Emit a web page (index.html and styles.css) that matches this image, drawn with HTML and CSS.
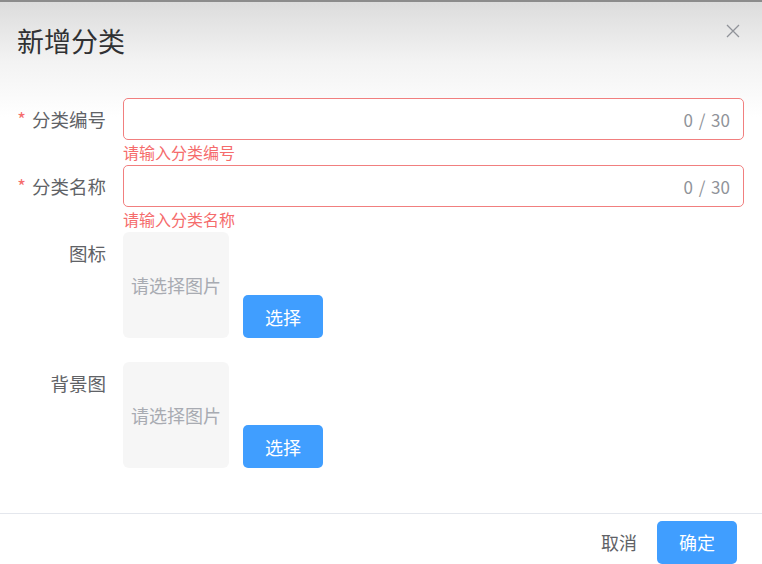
FILE: index.html
```html
<!DOCTYPE html>
<html lang="zh-CN">
<head>
  <meta charset="UTF-8">
  <meta name="viewport" content="width=device-width, initial-scale=1.0">
  <title>新增分类</title>
  <link rel="stylesheet" href="styles.css">
</head>
<body>
  <div class="dialog">
    <div class="dialog-header">
      <span class="dialog-title">新增分类</span>
      <button class="close-btn" aria-label="关闭">
        <svg width="14" height="14" viewBox="0 0 14 14">
          <path d="M1 1 L13 13 M13 1 L1 13" stroke="#909399" stroke-width="1.3" fill="none"/>
        </svg>
      </button>
    </div>

    <form class="dialog-body">
      <div class="form-item">
        <label class="form-label required">分类编号</label>
        <div class="form-content">
          <div class="input-wrap is-error">
            <input type="text" maxlength="30">
            <span class="counter">0 / 30</span>
          </div>
          <div class="form-error">请输入分类编号</div>
        </div>
      </div>

      <div class="form-item">
        <label class="form-label required">分类名称</label>
        <div class="form-content">
          <div class="input-wrap is-error">
            <input type="text" maxlength="30">
            <span class="counter">0 / 30</span>
          </div>
          <div class="form-error">请输入分类名称</div>
        </div>
      </div>

      <div class="form-item image-item">
        <label class="form-label">图标</label>
        <div class="form-content picker">
          <div class="image-box">请选择图片</div>
          <button type="button" class="btn btn-primary">选择</button>
        </div>
      </div>

      <div class="form-item image-item">
        <label class="form-label">背景图</label>
        <div class="form-content picker">
          <div class="image-box">请选择图片</div>
          <button type="button" class="btn btn-primary">选择</button>
        </div>
      </div>
    </form>

    <div class="dialog-footer">
      <button type="button" class="btn btn-text">取消</button>
      <button type="button" class="btn btn-primary">确定</button>
    </div>
  </div>
</body>
</html>
```

FILE: styles.css
```css
body {
  margin: 0;
  padding: 0;
  font-family: "Noto Sans CJK SC", "Liberation Sans", sans-serif;
  color: #606266;
  background: #fff;
}
.dialog {
  width: 762px;
  height: 564px;
  box-sizing: border-box;
  border-top: 2px solid #8c8c8c;
  background: linear-gradient(#dcdcdc 0, #f3f3f3 60px, #fff 115px);
  display: flex;
  flex-direction: column;
}
.dialog-header {
  display: flex;
  justify-content: space-between;
  align-items: flex-start;
  height: 96px;
  padding: 0 22px 0 17px;
  box-sizing: border-box;
}
.dialog-title {
  margin-top: 21px;
  font-size: 27px;
  line-height: 36px;
  color: #303133;
}
.close-btn {
  margin-top: 22px;
  border: none;
  background: transparent;
  padding: 0;
  cursor: pointer;
  line-height: 0;
}
.dialog-body {
  margin: 0;
  padding: 0 18px 0 0;
  flex: 1;
}
.form-item {
  display: flex;
  margin-bottom: 3px;
}
.form-label {
  width: 106px;
  padding-right: 17px;
  text-align: right;
  font-size: 18.5px;
  line-height: 42px;
  color: #606266;
  flex-shrink: 0;
}
.form-label.required::before {
  content: "*";
  color: #f56c6c;
  margin-right: 6px;
}
.form-content {
  flex: 1;
}
.input-wrap {
  display: flex;
  align-items: center;
  height: 42px;
  box-sizing: border-box;
  border: 1px solid #f17f7f;
  border-radius: 5px;
  background: #fff;
  padding: 0 13px 0 15px;
}
.input-wrap input {
  flex: 1;
  border: none;
  outline: none;
  font: inherit;
  font-size: 16px;
  background: transparent;
}
.counter {
  font-size: 17px;
  color: #909399;
  word-spacing: 2px;
}
.form-error {
  margin-top: 2px;
  font-size: 16px;
  line-height: 20px;
  color: #f56c6c;
}
.image-item {
  margin-bottom: 24px;
}
.picker {
  display: flex;
  align-items: flex-end;
  gap: 14px;
}
.image-box {
  width: 106px;
  height: 106px;
  border-radius: 6px;
  background: #f6f6f6;
  color: #a8abb2;
  font-size: 18px;
  display: flex;
  align-items: center;
  justify-content: center;
}
.btn {
  border: none;
  font: inherit;
  font-size: 18px;
  cursor: pointer;
  background: transparent;
}
.btn-primary {
  width: 80px;
  height: 43px;
  border-radius: 5px;
  background: #409eff;
  color: #fff;
}
.btn-text {
  color: #606266;
  padding: 0;
}
.dialog-footer {
  display: flex;
  justify-content: flex-end;
  align-items: center;
  gap: 20px;
  height: 51px;
  box-sizing: border-box;
  border-top: 1px solid #e4e7ed;
  padding: 6px 25px 0 0;
}
```
